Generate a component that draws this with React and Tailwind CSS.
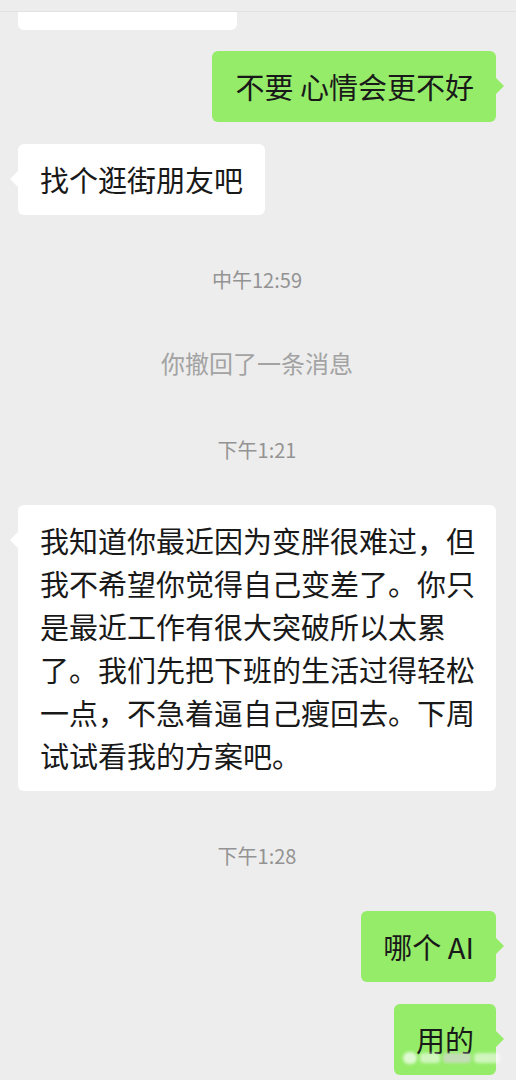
const font = { fontFamily: '"Noto Sans CJK SC", "Noto Sans", sans-serif' };

const Bubble = ({ mine, children, className = "" }) => (
  <div className={`relative rounded-[6px] px-[22px] py-[14px] text-[29px] leading-[43px] text-[#191919] ${mine ? "bg-[#95ec69] self-end" : "bg-white self-start"} ${className}`}>
    {children}
    {mine ? (
      <span className="absolute top-[27px] -right-[8px] w-0 h-0 border-y-[8px] border-y-transparent border-l-[8px] border-l-[#95ec69]" />
    ) : (
      <span className="absolute top-[27px] -left-[8px] w-0 h-0 border-y-[8px] border-y-transparent border-r-[8px] border-r-white" />
    )}
  </div>
);

const Stamp = ({ children, className = "" }) => (
  <div className={`self-center text-[20px] leading-[28px] text-[#939393] ${className}`}>{children}</div>
);

const longLines = [
  "我知道你最近因为变胖很难过，但",
  "我不希望你觉得自己变差了。你只",
  "是最近工作有很大突破所以太累",
  "了。我们先把下班的生活过得轻松",
  "一点，不急着逼自己瘦回去。下周",
  "试试看我的方案吧。",
];

export default function App() {
  return (
    <div className="relative h-[1080px] w-full overflow-hidden bg-[#ededed]" style={font}>
      <div className="h-[12px] border-b border-[#e2e2e2]" />
      <div className="flex flex-col pl-[18px] pr-[20px]">
        <div className="h-[18px] w-[219px] rounded-b-[6px] bg-white" />

        <Bubble mine className="mt-[21px] pl-[24px]">不要 心情会更不好</Bubble>
        <Bubble className="mt-[22px]">找个逛街朋友吧</Bubble>

        <Stamp className="mt-[51px]">中午12:59</Stamp>
        <div className="self-center mt-[53px] text-[24px] leading-[32px] text-[#a3a3a3]">你撤回了一条消息</div>
        <Stamp className="mt-[57px]">下午1:21</Stamp>

        <Bubble className="mt-[41px] self-stretch">
          {longLines.map((l) => (
            <div key={l} className="whitespace-nowrap">{l}</div>
          ))}
        </Bubble>

        <Stamp className="mt-[51px]">下午1:28</Stamp>

        <Bubble mine className="mt-[41px]">哪个 AI</Bubble>
        <Bubble mine className="mt-[22px]">用的</Bubble>
      </div>

      {/* watermark, blurred */}
      <div className="absolute bottom-[16px] right-[16px] flex items-center gap-[3px] opacity-70 blur-[1.5px]">
        <span className="h-[12px] w-[14px] rounded-full bg-white" />
        <span className="h-[10px] w-[20px] rounded-sm bg-white/80" />
        <span className="h-[10px] w-[28px] rounded-sm bg-[#d8d8d8]" />
        <span className="h-[10px] w-[26px] rounded-sm bg-white/80" />
      </div>
    </div>
  );
}
